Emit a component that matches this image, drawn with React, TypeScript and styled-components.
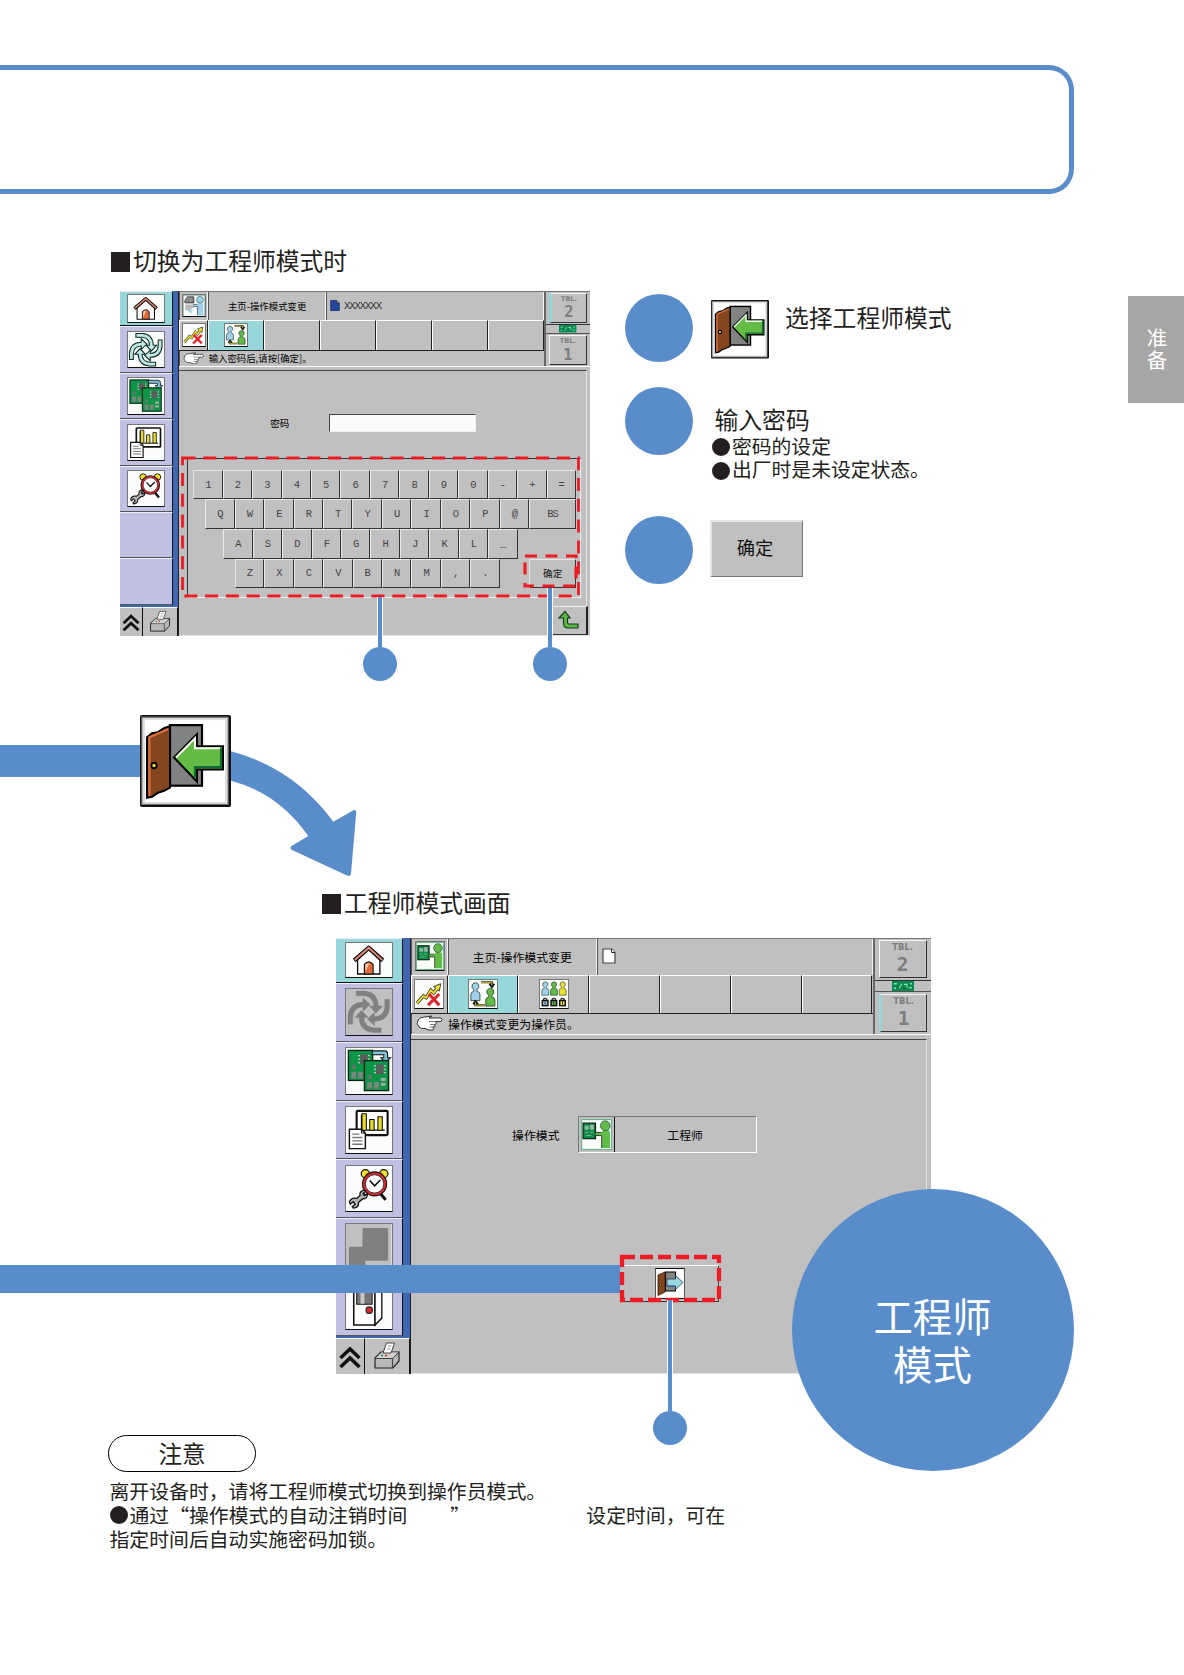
import React from 'react';
import styled, { createGlobalStyle, css } from 'styled-components';

const BLUE = '#588ccb';
const INK = '#231f20';
const GREY = '#c0c0c0';
const RED = '#ed1c24';
const CYAN = '#97d7da';
const LILAC = '#c1c0e2';

/* Panel dimensions scale with --u, so both terminals share one set of parts. */
const u = (n: number) => `calc(var(--u) * ${n}px)`;

const GlobalStyle = createGlobalStyle`
  * { box-sizing: border-box; }
  body {
    margin: 0;
    background: #fff;
    color: ${INK};
    font-family: "Liberation Sans", "Noto Sans CJK SC", sans-serif;
  }
  svg { display: block; flex: none; }
`;

const Page = styled.main`
  width: 1184px;
  height: 1675px;
  overflow: hidden;
  display: flex;
  flex-direction: column;
  background: #fff;
`;

const TitleFrame = styled.header`
  flex: none;
  width: 1074px;
  height: 129px;
  margin-top: 65px;
  border: 5px solid ${BLUE};
  border-left: 0;
  border-radius: 0 25px 25px 0;
`;

const TopRow = styled.section`
  flex: none;
  display: flex;
  height: 521px;
  padding-left: 110px;
`;

const PanelColumn = styled.div`
  width: 515px;
  padding-top: 50px;
`;

const Heading = styled.h2<{ $left: number }>`
  flex: none;
  display: flex;
  align-items: center;
  gap: 3px;
  height: 36px;
  margin: 0 0 0 ${p => p.$left}px;
  font-size: 23.8px;
  line-height: 36px;
  font-weight: 400;
  white-space: nowrap;
  &::before {
    content: '';
    width: 19px;
    height: 20px;
    background: ${INK};
  }
`;

const Terminal = styled.div<{ $unit: number; $top: number; $left: number }>`
  --u: ${p => p.$unit};
  position: relative;
  flex: none;
  display: flex;
  width: ${u(594.8)};
  height: ${u(436.4)};
  margin: ${p => p.$top}px 0 0 ${p => p.$left}px;
  background: ${GREY};
  color: #000;
`;

const Sidebar = styled.div`
  flex: none;
  display: flex;
  flex-direction: column;
  width: ${u(75)};
  background: #3f66b0;
  border-right: 1px solid #222;
`;

const NavCell = styled.div<{ $h: number; $active?: boolean }>`
  flex: none;
  display: flex;
  align-items: center;
  justify-content: center;
  width: ${u(66.5)};
  height: ${p => u(p.$h)};
  background: ${p => (p.$active ? CYAN : LILAC)};
  border-top: 1px solid #eef;
  border-bottom: 1.5px solid ${p => (p.$active ? '#111' : '#555')};
  border-right: 1px solid #111;
`;

const NavIcon = styled.div<{ $h?: number; $off?: boolean }>`
  display: flex;
  flex-direction: column;
  width: ${u(47.5)};
  height: ${p => u(p.$h ?? 47.5)};
  overflow: hidden;
  background: ${p => (p.$off ? GREY : '#fafcfa')};
  border: 1px solid #777;
  border-bottom-color: #111;
  svg { width: 100%; height: 100%; }
`;

const SideFoot = styled.div`
  flex: 1;
  display: flex;
  margin-top: ${u(2)};
  background: ${GREY};
`;

const FootButton = styled.div<{ $w: number }>`
  width: ${p => u(p.$w)};
  display: flex;
  align-items: center;
  justify-content: center;
  padding-bottom: ${u(3)};
  border-top: 1px solid #fff;
  border-right: 1.5px solid #111;
  svg { width: ${u(28)}; height: ${u(30)}; }
`;

const Main = styled.div`
  flex: 1;
  min-width: 0;
  display: flex;
  flex-direction: column;
`;

const Top = styled.div`
  flex: none;
  display: flex;
  height: ${u(96.5)};
  border-top: 1.5px solid #777;
  border-bottom: 1px solid #fff;
`;

const Bars = styled.div`
  width: ${u(461.5)};
  display: flex;
  flex-direction: column;
`;

const InfoBar = styled.div`
  display: flex;
  height: ${u(36)};
`;

const barText = css`
  font-size: ${u(11.9)};
  font-family: "Noto Sans CJK SC", sans-serif;
  font-weight: 400;
  white-space: nowrap;
`;

const InfoCell = styled.div<{ $w: number; $start?: boolean }>`
  ${barText}
  flex: none;
  width: ${p => u(p.$w)};
  display: flex;
  align-items: center;
  justify-content: ${p => (p.$start ? 'flex-start' : 'center')};
  padding-left: ${p => (p.$start ? u(4) : 0)};
  padding-bottom: ${u(1.5)};
  border-left: 1px solid #555;
  border-right: 1px solid #f4f4f4;
`;

const FileName = styled.span`
  margin-left: ${u(5)};
  color: #333;
  font: ${u(13.6)} "Liberation Mono", monospace;
  letter-spacing: ${u(-1.45)};
`;

const ToolBar = styled.div`
  display: flex;
  height: ${u(39)};
  border-bottom: 1.5px solid #222;
`;

const Tool = styled.div<{ $w?: number; $active?: boolean }>`
  flex: none;
  width: ${p => u(p.$w ?? 70.8)};
  display: flex;
  align-items: center;
  justify-content: center;
  padding-bottom: ${u(1.5)};
  background: ${p => (p.$active ? CYAN : GREY)};
  border-top: 1px solid #fff;
  border-left: 1px solid #fff;
  border-right: 1px solid #222;
`;

const Chip = styled.div`
  width: ${u(30)};
  height: ${u(30)};
  background: #fafcfa;
  border: 1px solid #777;
  border-bottom-color: #111;
  svg { width: 100%; height: 100%; }
`;

const Message = styled.div`
  ${barText}
  flex: 1;
  display: flex;
  align-items: center;
  padding-left: ${u(4)};
  padding-bottom: ${u(1.5)};
  border-left: 1px solid #555;
  svg { width: ${u(28)}; height: ${u(16)}; margin-right: ${u(4)}; }
`;

const Tables = styled.div`
  flex: 1;
  display: flex;
  flex-direction: column;
  align-items: center;
  padding-top: ${u(1)};
  border-left: 2px solid #666;
`;

const TableButton = styled.div<{ $on?: boolean }>`
  flex: none;
  width: ${u(48)};
  height: ${u(38)};
  display: flex;
  flex-direction: column;
  align-items: center;
  padding-top: ${u(1)};
  color: #7d7d7d;
  border: 1px solid #f4f4f4;
  border-left: ${p => (p.$on ? `3px solid ${CYAN}` : '1px solid #f4f4f4')};
  border-right: 1.5px solid #333;
  border-bottom: 1.5px solid #333;
`;

const TableName = styled.span`
  flex: none;
  height: ${u(11)};
  font: bold ${u(8.4)}/${u(11)} "DejaVu Sans", sans-serif;
`;

const TableNumber = styled.span`
  flex: none;
  height: ${u(24)};
  font: bold ${u(19.5)}/${u(24)} "DejaVu Sans Mono", monospace;
`;

const Link = styled.div`
  width: 100%;
  height: ${u(12)};
  margin: ${u(2)} 0 ${u(2)};
  display: flex;
  justify-content: center;
  border-top: 1.5px solid #333;
  border-bottom: 1.5px solid #555;
  svg { height: 100%; width: ${u(22)}; }
`;

const Content = styled.div`
  flex: 1;
  display: flex;
  flex-direction: column;
  margin: ${u(4)} ${u(4)} 0 0;
  border-top: 1.5px solid #444;
  border-right: 1px solid #e6e6e6;
  position: relative;
`;

const BottomEdge = styled.div`
  height: 1px;
  background: #e2e2e2;
`;

const PasswordRow = styled.div`
  display: flex;
  align-items: center;
  height: 20px;
  margin: 42px 0 0 91px;
  font: 9.6px "Noto Sans CJK SC", sans-serif;
`;

const PasswordField = styled.div`
  width: 147px;
  height: 18px;
  margin-left: 40px;
  background: #fafafa;
  border: 1.5px solid #444;
  border-right-color: #eee;
  border-bottom-color: #eee;
`;

const Keyboard = styled.div`
  width: 394px;
  height: 140px;
  margin: 25px 0 0 8px;
  padding: 10.5px 0 0 5px;
  border: 1px solid #333;
  border-right-color: #eee;
  border-bottom-color: #eee;
`;

const KeyRow = styled.div<{ $indent: number }>`
  display: flex;
  height: 29.6px;
  padding-left: ${p => p.$indent}px;
`;

const Key = styled.div<{ $w?: number; $gap?: number }>`
  flex: none;
  width: ${p => p.$w ?? 29.45}px;
  margin-left: ${p => p.$gap ?? 0}px;
  display: flex;
  align-items: center;
  justify-content: center;
  border-top: 1px solid #e8e8e8;
  border-left: 1px solid #e8e8e8;
  border-right: 1.5px solid #333;
  border-bottom: 1.5px solid #333;
  color: #444;
  font: 10.5px "Liberation Mono", "Noto Sans CJK SC", monospace;
  letter-spacing: -1px;
`;

const Enter = styled(Key)`
  color: #111;
  font-size: 9.6px;
  letter-spacing: 0;
`;

const BackKey = styled.div`
  align-self: flex-end;
  width: 36px;
  height: 29px;
  margin-top: auto;
  margin-right: -2px;
  display: flex;
  align-items: center;
  justify-content: center;
  border: 1px solid #eee;
  border-right: 2px solid #222;
  border-bottom: 1.5px solid #333;
`;

const ModeRow = styled.div`
  display: flex;
  align-items: center;
  gap: 18px;
  height: 37px;
  margin: 76px 0 0 101px;
  font: 11.9px "Noto Sans CJK SC", sans-serif;
`;

const ModeValue = styled.div`
  display: flex;
  width: 179px;
  height: 37px;
  border: 1.5px solid #777;
  border-right-color: #fff;
  border-bottom-color: #fff;
`;

const ModeIcon = styled.div`
  width: 36px;
  display: flex;
  align-items: center;
  justify-content: center;
  border-right: 1.5px solid #111;
`;

const ModeName = styled.div`
  flex: 1;
  display: flex;
  align-items: center;
  justify-content: center;
`;

const ExitButton = styled.div`
  width: 97px;
  height: 37px;
  margin: 112px 0 0 210.5px;
  display: flex;
  align-items: center;
  justify-content: center;
  border-top: 1px solid #fff;
  border-right: 1px solid #444;
  border-bottom: 1px solid #333;
`;

/* Callouts and connecting bands that lie over the terminals. */
const Outline = styled.svg<{ $x: number; $y: number }>`
  position: absolute;
  left: ${p => p.$x}px;
  top: ${p => p.$y}px;
  fill: none;
  stroke: ${RED};
`;

const Callout = styled.div<{ $x: number; $y: number; $len: number }>`
  position: absolute;
  left: ${p => p.$x - 17}px;
  top: ${p => p.$y}px;
  width: 34px;
  display: flex;
  flex-direction: column;
  align-items: center;
  &::before {
    content: '';
    width: 4px;
    height: ${p => p.$len}px;
    background: ${BLUE};
    border: solid #fff;
    border-width: 0 1px;
  }
  &::after {
    content: '';
    width: 34px;
    height: 34px;
    border-radius: 50%;
    background: ${BLUE};
  }
`;

const ReturnBand = styled.div`
  position: absolute;
  left: -336px;
  top: 327px;
  width: 620px;
  height: 28px;
  background: ${BLUE};
`;

const ModeBubble = styled.div`
  position: absolute;
  left: 455.5px;
  top: 251px;
  width: 282px;
  height: 282px;
  padding-top: 17px;
  border-radius: 50%;
  display: flex;
  flex-direction: column;
  align-items: center;
  justify-content: center;
  background: ${BLUE};
  color: #fff;
  font: 39.4px/47.5px "Noto Sans CJK SC", sans-serif;
`;

const Steps = styled.div`
  flex: 1;
  padding-top: 100px;
`;

const Step = styled.div<{ $h: number }>`
  display: flex;
  height: ${p => p.$h}px;
`;

const Dot = styled.div`
  flex: none;
  width: 68px;
  height: 68px;
  border-radius: 50%;
  background: ${BLUE};
`;

const DoorBox = styled.div`
  margin: 6px 0 0 18px;
`;

const StepTitle = styled.div<{ $x: number; $y: number }>`
  margin: ${p => p.$y}px 0 0 ${p => p.$x}px;
  font-size: 23.8px;
  line-height: 30px;
  white-space: nowrap;
`;

const StepBody = styled.div`
  margin-left: 19px;
`;

const Bullet = styled.div`
  display: flex;
  align-items: center;
  gap: 2px;
  height: 23.6px;
  font-size: 19.8px;
  line-height: 23.6px;
  white-space: nowrap;
  &::before {
    content: '';
    width: 18px;
    height: 18px;
    border-radius: 50%;
    background: ${INK};
  }
`;

const OkButton = styled.div`
  width: 93px;
  height: 57px;
  margin: 4px 0 0 16.5px;
  padding: 0 3px 4px 0;
  display: flex;
  align-items: center;
  justify-content: center;
  background: ${GREY};
  border: 2px solid #e4e4e4;
  border-right: 1.5px solid #777;
  border-bottom: 1.5px solid #777;
  color: #111;
  font: 18.3px "Noto Sans CJK SC", sans-serif;
`;

const SideTab = styled.aside`
  width: 56px;
  height: 107px;
  margin-top: 102px;
  padding: 32px 0 0 2px;
  background: #a6a6a6;
  color: #fff;
  font-size: 20.5px;
  line-height: 22px;
  text-align: center;
  display: flex;
  flex-direction: column;
`;

const FlowRow = styled.section`
  flex: none;
  display: flex;
  height: 171px;
`;

const FlowBand = styled.div`
  width: 140px;
  height: 32px;
  margin-top: 30px;
  background: ${BLUE};
`;

const NoticeBlock = styled.section`
  flex: none;
  margin: 61px 0 0 108px;
`;

const Pill = styled.div`
  width: 148px;
  height: 37px;
  display: flex;
  align-items: center;
  justify-content: center;
  padding-bottom: 1px;
  border: 1.3px solid #000;
  border-radius: 19px;
  font-size: 23.6px;
`;

const NoticeText = styled.div`
  margin: 6.5px 0 0 1.5px;
  font: 19.85px "Noto Sans CJK SC", sans-serif;
`;

const NoticeLine = styled.div`
  display: flex;
  align-items: center;
  height: 23.9px;
  line-height: 23.9px;
  white-space: nowrap;
`;

const Disc = styled.i`
  width: 18px;
  height: 18px;
  margin-right: 2px;
  border-radius: 50%;
  background: ${INK};
`;

const QuoteOpen = styled.span`
  width: 19.8px;
  text-align: right;
`;

const QuoteClose = styled.span`
  width: 179px;
  padding-left: 43px;
`;

const HomeIcon = () => (
  <svg viewBox="0 0 47 35">
    <path d="M12 17V32H35V17L23.5 6Z" fill="#fff" stroke="#111" strokeWidth="1.4" />
    <path d="M8.5 18L23.5 5L38 18" fill="none" stroke="#111" strokeWidth="4.6" strokeLinejoin="round" />
    <path d="M9 17.6L23.5 5L37.5 17.6" fill="none" stroke="#e28a72" strokeWidth="2" />
    <path d="M19 32V22Q23.500 17 28 22V32Z" fill="#e06a3a" stroke="#111" strokeWidth="1.2" />
    <path d="M20 22.5Q23 20 24 21L20 30Z" fill="#f7c9ae" />
  </svg>
);

const CycleIcon = ({ off }: { off?: boolean }) => (
  <svg viewBox="0 0 47 47">
    {[0, 90, 180, 270].map(a => (
      <path
        key={a}
        transform={`rotate(${a} 23.5 23.5)`}
        d="M10.500 2H19Q33 3 33.500 17.500H38L31 25L24 17.500H28.500Q28 7.500 18 7H10.500Z"
        fill={off ? '#808080' : '#c4e8e4'}
        stroke={off ? '#808080' : '#0e2c2b'}
        strokeWidth={off ? 0.3 : 1.4}
      />
    ))}
  </svg>
);

const Board = ({ x, y }: { x: number; y: number }) => (
  <g transform={`translate(${x} ${y})`}>
    <rect width="25" height="31" fill="#0c9447" stroke="#0b2414" strokeWidth="1.4" />
    <path d="M10 5.500H22M10 9H22M10 12.500H22" stroke="#c9d6cc" strokeWidth="1.3" />
    <rect x="12" y="4" width="8" height="10" fill="#59605c" />
    <path d="M5.500 13L8.500 19H3Z" fill="#6c746e" />
    <path d="M3 22h5v7H3zM10 22h5v7h-5z" fill="#7d857f" />
    <path d="M17 18h5v3h-5zM17 23h5v3h-5z" fill="#a3aaa5" />
  </g>
);

const BoardsIcon = () => (
  <svg viewBox="0 0 47 47">
    <Board x={2.5} y={2.5} />
    <path d="M27 3H40Q43 3 43 7V10H46L40.500 15L36 10H39V7H27Z" fill="#7cc4dc" stroke="#111" strokeWidth="1.1" />
    <Board x={19} y={13} />
  </svg>
);

const ReportIcon = () => (
  <svg viewBox="0 0 47 47">
    <rect x="11" y="4" width="32" height="25" rx="1" fill="#fff" stroke="#111" strokeWidth="2.2" />
    <path d="M16 8V24H40" fill="none" stroke="#111" strokeWidth="1.3" />
    <path d="M16.500 7h4.500v17h-4.500zM24.500 13h4.500v11h-4.500zM33 10h4.500v14h-4.500z" fill="#eadb2a" stroke="#111" strokeWidth="1.1" />
    <path d="M3.500 23H16L20 27V43H3.500Z" fill="#fff" stroke="#111" strokeWidth="1.5" />
    <path d="M16 23V27H20" fill="none" stroke="#111" />
    <path d="M6.500 28H14M6.500 31.500H17M6.500 35H17M6.500 38.500H17" stroke="#777" strokeWidth="1.4" />
  </svg>
);

const ClockIcon = () => (
  <svg viewBox="0 0 47 47">
    <path d="M20 29L15 35M36 29L41 35" stroke="#111" strokeWidth="3.2" />
    <circle cx="20" cy="8" r="4.300" fill="#f1e02e" stroke="#111" strokeWidth="1.2" />
    <circle cx="39" cy="8" r="4.300" fill="#f1e02e" stroke="#111" strokeWidth="1.2" />
    <circle cx="29.500" cy="18.500" r="13" fill="#111" />
    <circle cx="29.500" cy="18.500" r="11.800" fill="#e0262b" />
    <circle cx="29.500" cy="18.500" r="9.500" fill="#fff" stroke="#333" />
    <path d="M24.500 15L29.500 20.500L35.500 14.500" fill="none" stroke="#111" strokeWidth="1.7" />
    <path
      d="M3.500 37Q6 32 11 33.500L14.500 30.500Q13.500 26 19 25L20.500 26L17.500 28.500L19 30.500L22 28.500Q22.500 34 17 34L13 37.500Q13.500 43 7.500 43.500L6.500 42L9.500 39.500L7.500 37L4.500 39.500Z"
      fill="#b4b4b4"
      stroke="#111"
      strokeWidth="1.4"
    />
  </svg>
);

const MachineIcon = () => (
  <svg viewBox="0 0 47 106" preserveAspectRatio="none">
    <rect width="47" height="56" fill={GREY} />
    <rect y="56" width="47" height="50" fill="#fafcfa" />
    <rect x="17" y="4" width="26.500" height="33" rx="1.500" fill="#808080" />
    <rect x="3" y="23" width="17" height="34" rx="1.500" fill="#808080" />
    <path d="M8 62V102H30V62" fill="#fff" stroke="#111" strokeWidth="1.6" />
    <path d="M30 62V102L37 95V62Z" fill="#fff" stroke="#111" strokeWidth="1.4" />
    <rect x="11" y="62" width="16" height="19" fill="#777" stroke="#111" />
    <path d="M17 62v18.500" stroke="#c8c8c8" strokeWidth="4" />
    <circle cx="24" cy="87" r="3.300" fill="#e0262b" stroke="#222" strokeWidth="1.2" />
  </svg>
);

const ChevronsIcon = () => (
  <svg viewBox="0 0 28 30">
    <path d="M4.500 18L14 9L23.500 18M4.500 27L14 18L23.500 27" fill="none" stroke="#111" strokeWidth="3.500" />
  </svg>
);

const PrinterIcon = () => (
  <svg viewBox="0 0 28 30">
    <path d="M2 18L8 12H26V21L20 28H2Z" fill="#b9b9b9" stroke="#222" strokeWidth="1.2" />
    <path d="M2 18.500H19.500L26 12M19.500 18.500V28" fill="none" stroke="#444" strokeWidth="1.1" />
    <path d="M3 18L8.500 12.500H25L19.500 18Z" fill="#cfcfcf" />
    <path d="M10 13L13.500 3H21.500L18 13Z" fill="#fff" stroke="#444" strokeWidth="1" />
    <path d="M15 6H18.500M14 9H17.500" stroke="#999" />
    <path d="M8 15.500h2" stroke="#1a8c3c" strokeWidth="1.5" />
    <path d="M12 15.500h2" stroke="#d22" strokeWidth="1.5" />
  </svg>
);

const PersonIcon = ({ tone }: { tone: 'blue' | 'green' }) => {
  const fill = tone === 'blue' ? '#9fd2ea' : '#62bb46';
  return (
    <svg viewBox="0 0 30 30" width="31" height="31">
      <rect x=".6" y=".6" width="28.800" height="28.800" fill="#fafcfa" stroke={tone === 'blue' ? '#8aa' : '#5bb584'} strokeWidth="1" />
      {tone === 'blue' ? (
        <g>
          <path d="M2 9L6 2.500H15V11H3Z" fill="#777" stroke="#333" strokeWidth="1" />
          <path d="M5 5H13M4 8H13" stroke="#bbb" />
          <path d="M3 13H15V17L9 21H3Z" fill="#b9b9b9" />
          <path d="M4 20L12 26V20Z" fill="#9fd2ea" />
        </g>
      ) : (
        <g>
          <rect x="2" y="4" width="12" height="15" fill="#0c8d48" stroke="#0b2414" strokeWidth="1.2" />
          <path d="M4 7h3v3H4zM9 6h3v4H9zM4 13h3M9 13h3M5 16h5" fill="#9bb7a5" stroke="#9bb7a5" strokeWidth=".8" />
        </g>
      )}
      <path d="M14 13H20L21 11H27L28 13V28H20V16H14Z" fill={fill} />
      <path d="M20 28V16H14M14 13H20" fill="none" stroke="#222" strokeWidth=".8" />
      <circle cx="23.500" cy="6.500" r="4.700" fill={fill} stroke="#345" strokeWidth=".7" />
    </svg>
  );
};

const Figure = ({ x, y, fill, s = 1 }: { x: number; y: number; fill: string; s?: number }) => (
  <g transform={`translate(${x} ${y}) scale(${s})`} fill={fill} stroke="#1d3a2c" strokeWidth=".8">
    <path d="M0 18V12Q0 9.500 3 9L3 7.500Q0 5 1.500 2Q4.500 -1 7.500 2Q9 5 6 7.500V9Q9 9.500 9 12V18Z" />
  </g>
);

const SwapIcon = () => (
  <svg viewBox="0 0 30 30">
    <Figure x={2} y={2.5} fill="#9fd2ea" s={1.08} />
    <Figure x={18} y={8.5} fill="#62bb46" s={1.08} />
    <path d="M13 2.500H24.500V6M27 4L24.500 7.500L22 4M17 27H7V24M4.500 26L7 23L9.500 26" fill="none" stroke="#111" strokeWidth="2.2" />
    <path d="M13 2.500H24.500V6M17 27H7V24" fill="none" stroke="#e8d82c" strokeWidth="1" />
  </svg>
);

const GroupIcon = () => (
  <svg viewBox="0 0 30 30">
    {['#9fd2ea', '#62bb46', '#efe02b'].map((c, i) => (
      <g key={c}>
        <Figure x={2 + i * 9.3} y={1.5} fill={c} s={0.82} />
        <path d={`M${3.800 + i * 9.3} 22V20.500q1.700 -2 3.400 0V22`} fill="none" stroke="#111" strokeWidth="1.2" />
        <rect x={2.500 + i * 9.3} y="22" width="6" height="5.500" fill={c} stroke="#111" strokeWidth="1.6" />
        <path d={`M${5.500 + i * 9.3} 23v3`} stroke="#111" />
      </g>
    ))}
  </svg>
);

const TrendOffIcon = () => (
  <svg viewBox="0 0 30 30">
    <path d="M2 25L9 17L12 19L17 11L20 14L26 6" fill="none" stroke="#333" strokeWidth="3.600" />
    <path d="M20 7L27.500 4L26 12Z" fill="#efe02b" stroke="#333" />
    <path d="M2 25L9 17L12 19L17 11L20 14L26 6" fill="none" stroke="#efe02b" strokeWidth="2" />
    <path d="M15 15L26 27M26 15L14 27" stroke="#e0262b" strokeWidth="3.300" />
  </svg>
);

const HandIcon = () => (
  <svg viewBox="0 0 28 16">
    <path d="M9 2Q4 2 2 5Q0 9 3 12Q5 14 9 13.500L13 15H17Q18 13 17 12Q20 12 19 9.500Q21 9 20 6.500H25Q27 4.500 25 3H13L16 1Z" fill="#fff" stroke="#333" strokeWidth="1" />
    <path d="M13 6.500H20M14 9.500H19M13.500 12H17" fill="none" stroke="#555" strokeWidth=".8" />
  </svg>
);

const SheetIcon = ({ filled }: { filled?: boolean }) => (
  <svg viewBox="0 0 14 16" width={filled ? 10 : 14} height={filled ? 13 : 16}>
    <path d="M1 1H9.500L13 4.500V15H1Z" fill={filled ? '#27479d' : '#fff'} stroke={filled ? '#173072' : '#444'} strokeWidth="1.200" />
    <path d="M9.500 1V4.500H13" fill={filled ? '#9db2e0' : '#fff'} stroke="#222" />
  </svg>
);

const LinkBoard = () => (
  <svg viewBox="0 0 22 9" preserveAspectRatio="none">
    <rect width="22" height="9" fill="#078a50" />
    <path d="M2 2.500h3M7 6.500L10 2.500M12 3h3v3M18 2.500h2M2 6.500h2M17 6h3" fill="none" stroke="#8fe0b0" strokeWidth="1.200" />
    <path d="M5 5h2M11 7h3M16 3.500h1.500" stroke="#063" />
  </svg>
);

const EnterDoor = ({ size }: { size: number }) => (
  <svg width={size} height={size * 1.01} viewBox="0 0 91 91" preserveAspectRatio="none">
    <rect x="0" y="0" width="91" height="91" rx="2" fill="#111" />
    <rect x="1.200" y="1.500" width="87.500" height="87.500" fill="#777" />
    <rect x="2.500" y="3" width="85" height="85" fill="#e0e0e0" />
    <rect x="5" y="5" width="80" height="81" fill="#fff" />
    <rect x="30" y="10" width="32" height="60" fill="#808382" stroke="#000" strokeWidth="2.200" />
    <path d="M7 22L12 18L18 17L24 13L30 11V72L24 75L18 77L12 81L7 82Z" fill="#84451f" stroke="#000" strokeWidth="2" />
    <path d="M9.500 80V22L28 14" fill="none" stroke="#e3713c" strokeWidth="2" />
    <circle cx="14" cy="50" r="2.700" fill="#e2d41c" stroke="#000" strokeWidth="1.800" />
    <path d="M34 42L57 19V31H83V54H57V66Z" fill="#64bb46" stroke="#000" strokeWidth="2" />
    <path d="M36 42L55 23V33H80" fill="none" stroke="#f4faf2" strokeWidth="2" />
    <path d="M81 33V51.500H55V62" fill="none" stroke="#0b6b35" strokeWidth="2.200" />
  </svg>
);

const LeaveDoor = () => (
  <svg width="30" height="31" viewBox="0 0 30 31">
    <rect x=".5" y=".5" width="29" height="30" fill="#fafcfa" stroke="#555" />
    <path d="M.5 .5H29.500M.5 30.500H29.500" stroke="#111" />
    <rect x="10.500" y="4" width="10" height="19" fill="#808382" stroke="#000" />
    <path d="M3 7L10 4V24L3 27.500Z" fill="#84451f" stroke="#3b1b08" strokeWidth=".8" />
    <circle cx="5.500" cy="17" r="1.200" fill="#e2d41c" stroke="#000" strokeWidth=".7" />
    <path d="M12 11H20.500V7.500L28 14.500L20.500 21.500V18H12Z" fill="#97d7e2" stroke="#123" strokeWidth=".7" />
    <path d="M12 18H20.500" stroke="#2c62b0" />
  </svg>
);

const BackIcon = () => (
  <svg width="22" height="20" viewBox="0 0 22 20">
    <path d="M1 8L7 1.500L12 8H9.500V12.500Q9.500 14 11 14H20V18H10Q5.500 18 5.500 13V8Z" fill="#5db848" stroke="#123b18" strokeWidth="1.200" />
  </svg>
);

const CurvedArrow = () => (
  <svg width="130" height="165" viewBox="231 715 130 165">
    <path
      d="M231 751.300Q294 768 333.300 821.700L353 810.500Q356.500 809 356.200 813L351 873.500Q350.700 877 347 875.500L292 850Q289 848 291.500 846L308.300 836Q278 793 231 780.700Z"
      fill={BLUE}
    />
  </svg>
);

const NAV_HEIGHTS = [59, 59, 58.5, 58.5];

const SidePanel = ({ engineer }: { engineer?: boolean }) => (
  <Sidebar>
    <NavCell $h={44.5} $active><NavIcon $h={36}><HomeIcon /></NavIcon></NavCell>
    {[<CycleIcon off={engineer} />, <BoardsIcon />, <ReportIcon />, <ClockIcon />].map((icon, i) => (
      <NavCell key={i} $h={NAV_HEIGHTS[i]}>
        <NavIcon $off={engineer && i === 0}>{icon}</NavIcon>
      </NavCell>
    ))}
    {engineer ? (
      <NavCell $h={118}><NavIcon $h={107}><MachineIcon /></NavIcon></NavCell>
    ) : (
      <>
        <NavCell $h={59} />
        <NavCell $h={59} />
      </>
    )}
    <SideFoot>
      <FootButton $w={29.5}><ChevronsIcon /></FootButton>
      <FootButton $w={45}><PrinterIcon /></FootButton>
    </SideFoot>
  </Sidebar>
);

const TableTab = ({ n, on }: { n: number; on?: boolean }) => (
  <TableButton $on={on}>
    <TableName>TBL.</TableName>
    <TableNumber>{n}</TableNumber>
  </TableButton>
);

const TopPanel = ({ engineer, message }: { engineer?: boolean; message: string }) => (
  <Top>
    <Bars>
      <InfoBar>
        <InfoCell $w={37}><Chip><PersonIcon tone={engineer ? 'green' : 'blue'} /></Chip></InfoCell>
        <InfoCell $w={148.5}>主页-操作模式变更</InfoCell>
        <InfoCell $w={276} $start>
          <SheetIcon filled={!engineer} />
          {!engineer && <FileName>XXXXXXX</FileName>}
        </InfoCell>
      </InfoBar>
      <ToolBar>
        <Tool $w={36.7}><Chip><TrendOffIcon /></Chip></Tool>
        <Tool $active><Chip><SwapIcon /></Chip></Tool>
        <Tool>{engineer && <Chip><GroupIcon /></Chip>}</Tool>
        <Tool /><Tool /><Tool /><Tool />
      </ToolBar>
      <Message><HandIcon />{message}</Message>
    </Bars>
    <Tables>
      <TableTab n={2} on={!engineer} />
      <Link><LinkBoard /></Link>
      <TableTab n={1} on={engineer} />
    </Tables>
  </Top>
);

const ROWS = [
  { indent: 0, keys: '1234567890-+=' },
  { indent: 12, keys: 'QWERTYUIOP@' },
  { indent: 30, keys: 'ASDFGHJKL_' },
  { indent: 41.5, keys: 'ZXCVBNM,.' },
];

const PasswordTerminal = () => (
  <Terminal $unit={0.79} $top={11} $left={10}>
    <SidePanel />
    <Main>
      <TopPanel message="输入密码后,请按[确定]。" />
      <Content>
        <PasswordRow>密码<PasswordField /></PasswordRow>
        <Keyboard>
          {ROWS.map((row, r) => (
            <KeyRow key={row.keys} $indent={row.indent}>
              {[...row.keys].map(k => <Key key={k}>{k}</Key>)}
              {r === 1 && <Key $w={47}>BS</Key>}
              {r === 3 && <Enter $w={47} $gap={29.5}>确定</Enter>}
            </KeyRow>
          ))}
        </Keyboard>
        <BackKey><BackIcon /></BackKey>
      </Content>
      <BottomEdge />
    </Main>
    <Outline $x={61} $y={165} width="400" height="143" strokeWidth="2.8" strokeDasharray="13 7.8">
      <rect x="1.500" y="2" width="396" height="138" />
    </Outline>
    <Outline $x={403} $y={263} width="56" height="36" strokeWidth="3.2" strokeDasharray="12 8.500">
      <rect x="2" y="2" width="51" height="30" />
    </Outline>
    <Callout $x={260} $y={306} $len={50} />
    <Callout $x={430} $y={297} $len={59} />
  </Terminal>
);

const EngineerTerminal = () => (
  <Terminal $unit={1} $top={16} $left={336}>
    <SidePanel engineer />
    <Main>
      <TopPanel engineer message="操作模式变更为操作员。" />
      <Content>
        <ModeRow>
          操作模式
          <ModeValue>
            <ModeIcon><PersonIcon tone="green" /></ModeIcon>
            <ModeName>工程师</ModeName>
          </ModeValue>
        </ModeRow>
        <ExitButton><LeaveDoor /></ExitButton>
      </Content>
      <BottomEdge />
    </Main>
    <ReturnBand />
    <Outline $x={283} $y={316} width="104" height="50" strokeWidth="4.3" strokeDasharray="13 5">
      <rect x="3" y="3" width="97" height="43" />
    </Outline>
    <Callout $x={334} $y={362} $len={111} />
    <ModeBubble><span>工程师</span><span>模式</span></ModeBubble>
  </Terminal>
);

export default function App() {
  return (
    <Page>
      <GlobalStyle />
      <TitleFrame />
      <TopRow>
        <PanelColumn>
          <Heading $left={1}>切换为工程师模式时</Heading>
          <PasswordTerminal />
        </PanelColumn>
        <Steps>
          <Step $h={93}>
            <Dot />
            <DoorBox><EnterDoor size={58} /></DoorBox>
            <StepTitle $x={16} $y={10}>选择工程师模式</StepTitle>
          </Step>
          <Step $h={129}>
            <Dot />
            <StepBody>
              <StepTitle $x={2.5} $y={18.5}>输入密码</StepTitle>
              <Bullet>密码的设定</Bullet>
              <Bullet>出厂时是未设定状态。</Bullet>
            </StepBody>
          </Step>
          <Step $h={68}>
            <Dot />
            <OkButton>确定</OkButton>
          </Step>
        </Steps>
        <SideTab><span>准</span><span>备</span></SideTab>
      </TopRow>
      <FlowRow>
        <FlowBand />
        <EnterDoor size={91} />
        <CurvedArrow />
      </FlowRow>
      <Heading $left={322}>工程师模式画面</Heading>
      <EngineerTerminal />
      <NoticeBlock>
        <Pill>注意</Pill>
        <NoticeText>
          <NoticeLine>离开设备时，请将工程师模式切换到操作员模式。</NoticeLine>
          <NoticeLine>
            <Disc />通过<QuoteOpen>“</QuoteOpen>操作模式的自动注销时间
            <QuoteClose>”</QuoteClose>设定时间，可在
          </NoticeLine>
          <NoticeLine>指定时间后自动实施密码加锁。</NoticeLine>
        </NoticeText>
      </NoticeBlock>
    </Page>
  );
}
